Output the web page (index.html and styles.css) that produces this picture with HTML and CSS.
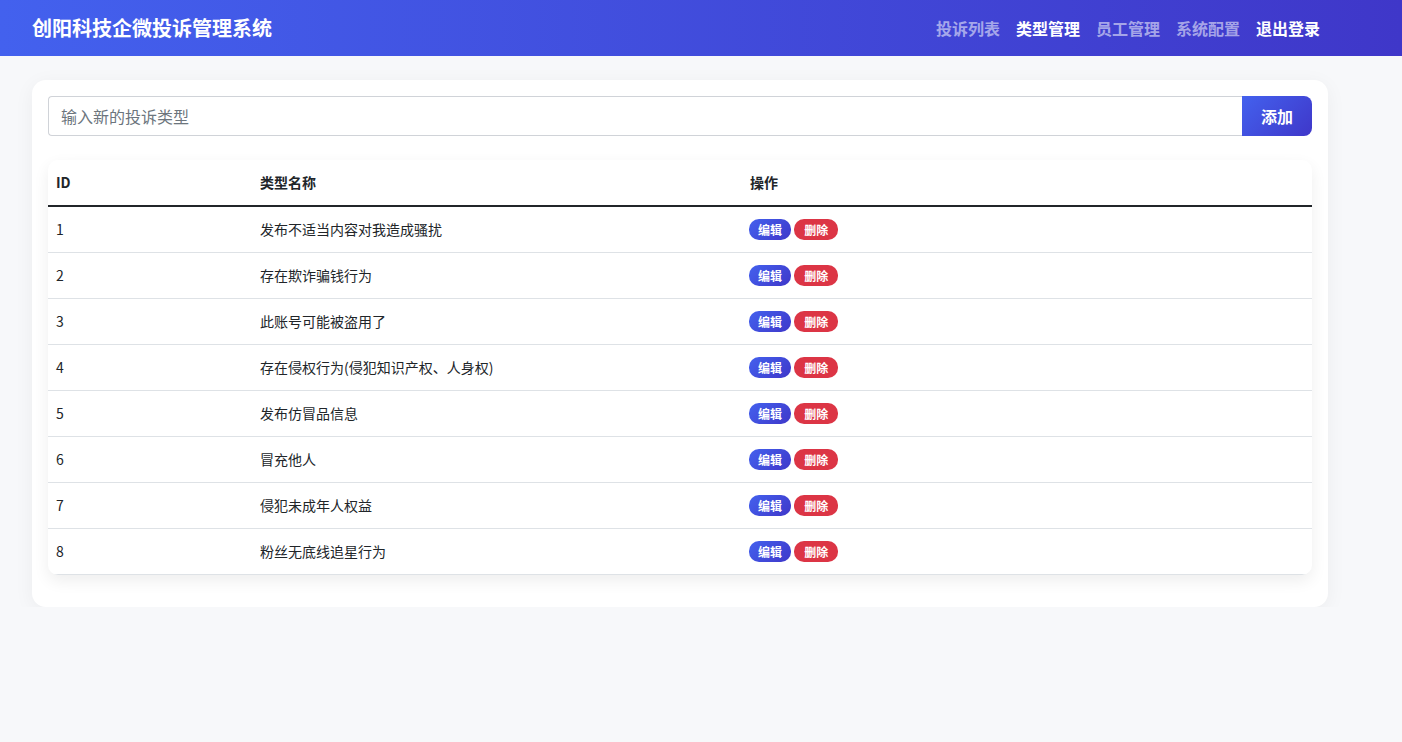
FILE: index.html
```html
<!DOCTYPE html>
<html lang="zh-CN">
<head>
    <meta charset="UTF-8">
    <title>类型管理 - 创阳科技企微投诉管理系统</title>
    <link rel="stylesheet" href="styles.css">
</head>
<body>
    <header class="topbar">
        <div class="topbar-inner">
            <div class="brand">创阳科技企微投诉管理系统</div>
            <nav class="nav">
                <a href="#" class="nav-link">投诉列表</a>
                <a href="#" class="nav-link active">类型管理</a>
                <a href="#" class="nav-link">员工管理</a>
                <a href="#" class="nav-link">系统配置</a>
                <a href="#" class="nav-link logout">退出登录</a>
            </nav>
        </div>
    </header>

    <main class="main">
        <div class="card">
            <form class="add-form" action="">
                <input type="text" class="add-input" placeholder="输入新的投诉类型">
                <button type="submit" class="add-btn">添加</button>
            </form>

            <div class="table-wrap">
                <table class="type-table">
                    <thead>
                        <tr>
                            <th class="col-id">ID</th>
                            <th class="col-name">类型名称</th>
                            <th>操作</th>
                        </tr>
                    </thead>
                    <tbody>
                        <tr><td>1</td><td>发布不适当内容对我造成骚扰</td><td><button class="btn-sm edit">编辑</button> <button class="btn-sm del">删除</button></td></tr>
                        <tr><td>2</td><td>存在欺诈骗钱行为</td><td><button class="btn-sm edit">编辑</button> <button class="btn-sm del">删除</button></td></tr>
                        <tr><td>3</td><td>此账号可能被盗用了</td><td><button class="btn-sm edit">编辑</button> <button class="btn-sm del">删除</button></td></tr>
                        <tr><td>4</td><td>存在侵权行为(侵犯知识产权、人身权)</td><td><button class="btn-sm edit">编辑</button> <button class="btn-sm del">删除</button></td></tr>
                        <tr><td>5</td><td>发布仿冒品信息</td><td><button class="btn-sm edit">编辑</button> <button class="btn-sm del">删除</button></td></tr>
                        <tr><td>6</td><td>冒充他人</td><td><button class="btn-sm edit">编辑</button> <button class="btn-sm del">删除</button></td></tr>
                        <tr><td>7</td><td>侵犯未成年人权益</td><td><button class="btn-sm edit">编辑</button> <button class="btn-sm del">删除</button></td></tr>
                        <tr><td>8</td><td>粉丝无底线追星行为</td><td><button class="btn-sm edit">编辑</button> <button class="btn-sm del">删除</button></td></tr>
                    </tbody>
                </table>
            </div>
        </div>
    </main>
</body>
</html>
```

FILE: styles.css
```css
*{margin:0;padding:0;box-sizing:border-box;}
body{
    background:#f7f8fa;
    color:#212529;
    font-family:"Noto Sans CJK SC","Noto Sans",sans-serif;
    font-size:14px;
    line-height:1.5;
}

/* 顶部栏 */
.topbar{
    height:56px;
    background:linear-gradient(90deg,#4361ee,#3f37c9);
}
.topbar-inner{
    width:1296px;
    margin-left:32px;
    height:56px;
    display:flex;
    align-items:center;
    justify-content:space-between;
}
.brand{color:#fff;font-size:20px;font-weight:bold;}
.nav{display:flex;}
.nav-link{
    padding:0 8px;
    font-size:16px;
    font-weight:bold;
    color:rgba(255,255,255,.55);
    text-decoration:none;
}
.nav-link.active,.nav-link.logout{color:#fff;}

/* 内容卡片 */
.main{padding:24px 0 0 32px;}
.card{
    width:1296px;
    background:#fff;
    border-radius:14px;
    padding:16px 16px 32px;
    box-shadow:0 4px 20px rgba(0,0,0,.05);
}
.add-form{display:flex;height:40px;}
.add-input{
    flex:1;
    height:40px;
    border:1px solid #d0d3d8;
    border-right:0;
    border-radius:4px 0 0 4px;
    padding:0 12px;
    font-family:inherit;
    font-size:16px;
    color:#212529;
    outline:none;
}
.add-input::placeholder{color:#6c757d;}
.add-btn{
    width:70px;
    height:40px;
    border:0;
    border-radius:0 8px 8px 0;
    background:linear-gradient(135deg,#4361ee,#3f37c9);
    color:#fff;
    font-family:inherit;
    font-size:16px;
    font-weight:bold;
}

/* 表格 */
.table-wrap{
    margin-top:24px;
    border-radius:10px;
    overflow:hidden;
    box-shadow:0 6px 16px rgba(0,0,0,.07);
}
.type-table{width:100%;border-collapse:collapse;}
.type-table th,.type-table td{
    text-align:left;
    padding:12px 8px;
    line-height:21px;
    border-bottom:1px solid #dee2e6;
    vertical-align:middle;
}
.type-table th{font-weight:bold;border-bottom:2px solid #212529;}
.type-table .col-id{width:204px;}
.type-table .col-name{width:490px;}
.type-table td:last-child{padding-left:7px;}
.btn-sm{
    display:inline-block;
    height:21px;
    padding:0 9px;
    border:0;
    border-radius:10px;
    color:#fff;
    font-family:inherit;
    font-size:12px;
    font-weight:bold;
    line-height:21px;
    vertical-align:top;
}
.btn-sm.edit{background:linear-gradient(135deg,#4361ee,#3f37c9);}
.btn-sm.del{background:#dc3545;padding:0 10px;}
```
